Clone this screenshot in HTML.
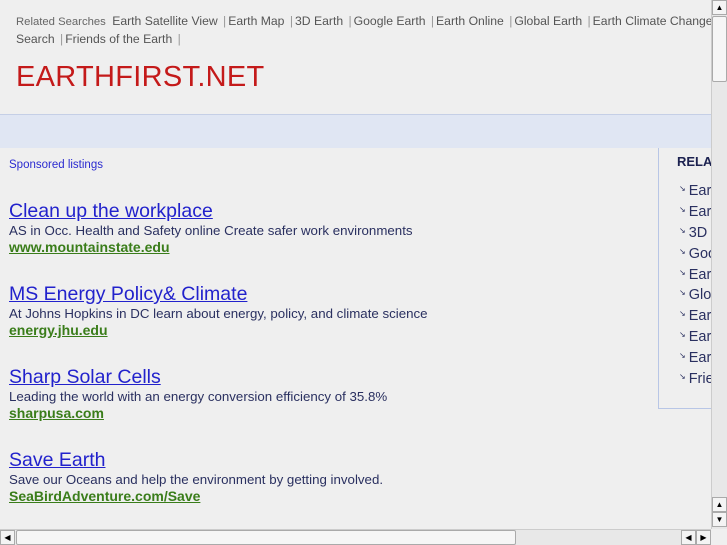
<!DOCTYPE html>
<html><head><meta charset="utf-8"><style>
*{margin:0;padding:0;box-sizing:border-box}
body{width:727px;height:545px;overflow:hidden;background:#efefef;font-family:"Liberation Sans",sans-serif;position:relative}
.top{position:absolute;left:16px;top:13px;width:720px;font-size:12.2px;color:#555;line-height:17px;white-space:nowrap}
.top .rs{font-size:11.3px;color:#666;margin-right:3px}
.top span.s{color:#999;margin:0 2px}
.logo{position:absolute;left:16px;top:63px;font-size:29px;color:#c41a1a;letter-spacing:0.3px;line-height:29px}
.band{position:absolute;left:0;top:114px;width:711px;height:34px;background:#e0e6f3;border-top:1px solid #c5cfe6}
.sp{position:absolute;left:9px;top:159px;font-size:11.5px;color:#2a2ad0}
.ad{position:absolute;left:9px}
.ad .t{font-size:19.5px;color:#2222cc;text-decoration:underline;line-height:22px}
.ad .d{font-size:13.3px;color:#2a3060;line-height:17px}
.ad .u{font-size:14px;color:#3a7d1a;font-weight:bold;text-decoration:underline;line-height:17px}
.side{position:absolute;left:658px;top:148px;width:60px;height:261px;border-left:1px solid #b8c6e6;border-bottom:1px solid #b8c6e6}
.side h4{position:absolute;left:18px;top:6px;font-size:13px;color:#1c2250;font-weight:bold}
.side ul{list-style:none;position:absolute;left:20px;top:33px}
.side li{font-size:14.5px;color:#2a3060;height:20.9px;white-space:nowrap}
.side li:before{content:"↘";font-size:8px;color:#2a3060;margin-right:3px;vertical-align:4px}
.vs{position:absolute;left:711px;top:0;width:16px;height:529px;background:#e8e8e8;border-left:1px solid #ccc}
.hs{position:absolute;left:0;top:529px;width:711px;height:16px;background:#e8e8e8;border-top:1px solid #ccc}
.btn{position:absolute;width:15px;height:15px;background:#f4f4f4;border:1px solid #aaa;font-size:8px;text-align:center;line-height:13px;color:#000}
.thumb{position:absolute;background:#f6f6f6;border:1px solid #aaa;border-radius:2px}
</style></head><body>
<div class="top"><span class="rs">Related Searches</span> Earth Satellite View <span class="s">|</span>Earth Map <span class="s">|</span>3D Earth <span class="s">|</span>Google Earth <span class="s">|</span>Earth Online <span class="s">|</span>Global Earth <span class="s">|</span>Earth Climate Change <span class="s">|</span><br>Search <span class="s">|</span>Friends of the Earth <span class="s">|</span></div>
<div class="logo">EARTHFIRST.NET</div>
<div class="band"></div>
<div class="sp">Sponsored listings</div>
<div class="ad" style="top:200px"><div class="t">Clean up the workplace</div><div class="d">AS in Occ. Health and Safety online Create safer work environments</div><div class="u">www.mountainstate.edu</div></div>
<div class="ad" style="top:283px"><div class="t">MS Energy Policy&amp; Climate</div><div class="d">At Johns Hopkins in DC learn about energy, policy, and climate science</div><div class="u">energy.jhu.edu</div></div>
<div class="ad" style="top:366px"><div class="t">Sharp Solar Cells</div><div class="d">Leading the world with an energy conversion efficiency of 35.8%</div><div class="u">sharpusa.com</div></div>
<div class="ad" style="top:449px"><div class="t">Save Earth</div><div class="d">Save our Oceans and help the environment by getting involved.</div><div class="u">SeaBirdAdventure.com/Save</div></div>
<div class="side"><h4>RELATED</h4><ul style="top:35px"><li>Earth</li><li>Earth</li><li>3D</li><li>Google</li><li>Earth</li><li>Global</li><li>Earth</li><li>Earth</li><li>Earth</li><li>Friends</li></ul></div>
<div class="vs"><div class="btn" style="left:0;top:0">▲</div><div class="thumb" style="left:0;top:16px;width:15px;height:66px"></div><div class="btn" style="left:0;top:497px">▲</div><div class="btn" style="left:0;top:512px">▼</div></div>
<div class="hs"><div class="btn" style="left:0;top:0">◀</div><div class="thumb" style="left:16px;top:0;width:500px;height:15px"></div><div class="btn" style="left:681px;top:0">◀</div><div class="btn" style="left:696px;top:0">▶</div></div>
</body></html>
